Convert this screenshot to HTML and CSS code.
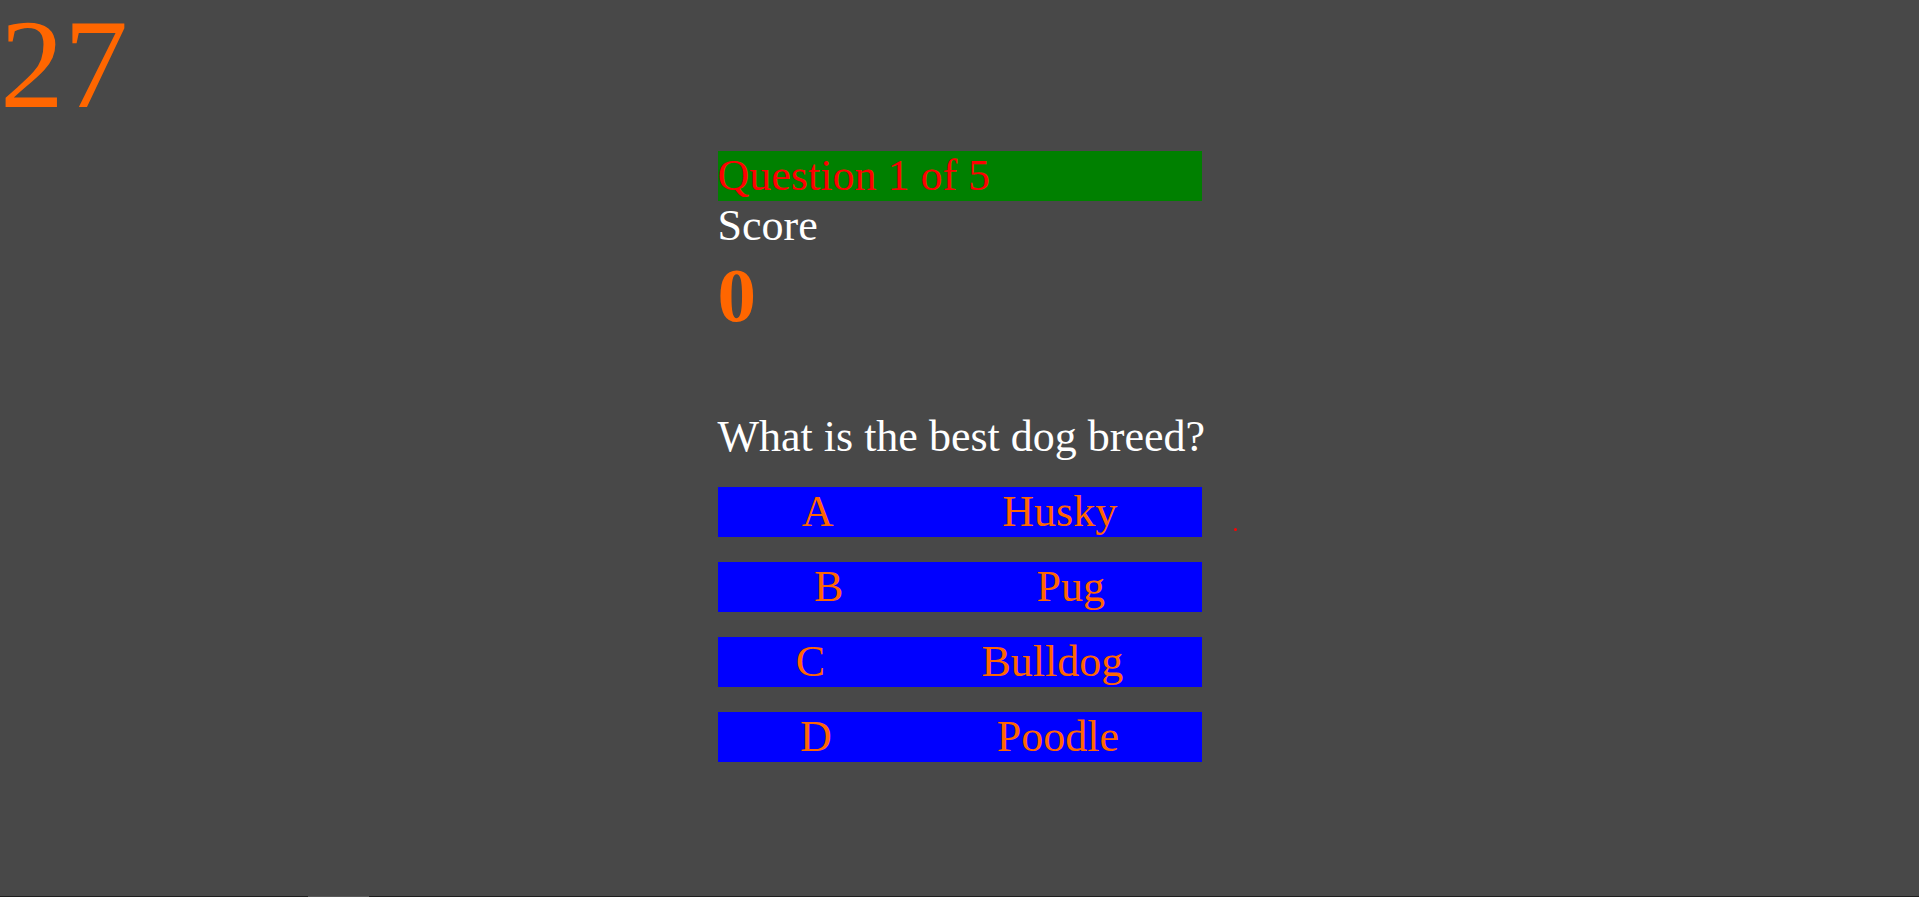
FILE: index.html
```html
<!DOCTYPE html>
<html lang="en">
<head>
<meta charset="utf-8">
<title>Dog Quiz</title>
<link rel="stylesheet" href="styles.css">
</head>
<body>
  <div class="timer">27</div>
  <main class="quiz">
    <div class="progress">Question 1 of 5</div>
    <div class="score-label">Score</div>
    <div class="score-value">0</div>
    <h2 class="question">What is the best dog breed?</h2>
    <div class="answers">
      <div class="answer"><span class="letter">A</span><span class="choice">Husky</span></div>
      <div class="answer"><span class="letter">B</span><span class="choice">Pug</span></div>
      <div class="answer"><span class="letter">C</span><span class="choice">Bulldog</span></div>
      <div class="answer"><span class="letter">D</span><span class="choice">Poodle</span></div>
    </div>
    <span class="dot"></span>
  </main>
  <div class="bottom-line"><span class="thumb"></span></div>
</body>
</html>
```

FILE: styles.css
```css
html, body {
  margin: 0;
  padding: 0;
  height: 100%;
}

body {
  background: #484848;
  font-family: "Liberation Serif", "Times New Roman", serif;
  overflow: hidden;
}

.timer {
  color: #ff6600;
  font-size: 128px;
  line-height: 1;
  height: 128px;
}

.quiz {
  position: relative;
  width: 484px;
  margin: 23px auto 0;
  font-size: 44px;
}

.progress {
  background: #008000;
  color: #ff0000;
  line-height: 50px;
  height: 50px;
}

.score-label {
  color: #ffffff;
  line-height: 50px;
}

.score-value {
  color: #ff6600;
  font-size: 77px;
  font-weight: bold;
  line-height: 88px;
}

.question {
  margin: 73px 0 25px;
  color: #ffffff;
  font-size: 44px;
  font-weight: normal;
  line-height: 50px;
  white-space: nowrap;
}

.answers {
  display: flex;
  flex-direction: column;
  gap: 25px;
}

.answer {
  display: flex;
  justify-content: space-around;
  background: #0000ff;
  color: #ff6600;
  height: 50px;
  line-height: 50px;
}

.dot {
  position: absolute;
  left: 516px;
  top: 377px;
  width: 3px;
  height: 3px;
  border-radius: 50%;
  background: #ff0000;
}

.bottom-line {
  position: fixed;
  left: 0;
  right: 0;
  bottom: 0;
  height: 1px;
  background: #1e1e1e;
}

.thumb {
  position: absolute;
  left: 308px;
  width: 61px;
  height: 1px;
  background: #5a5a5a;
}
```
